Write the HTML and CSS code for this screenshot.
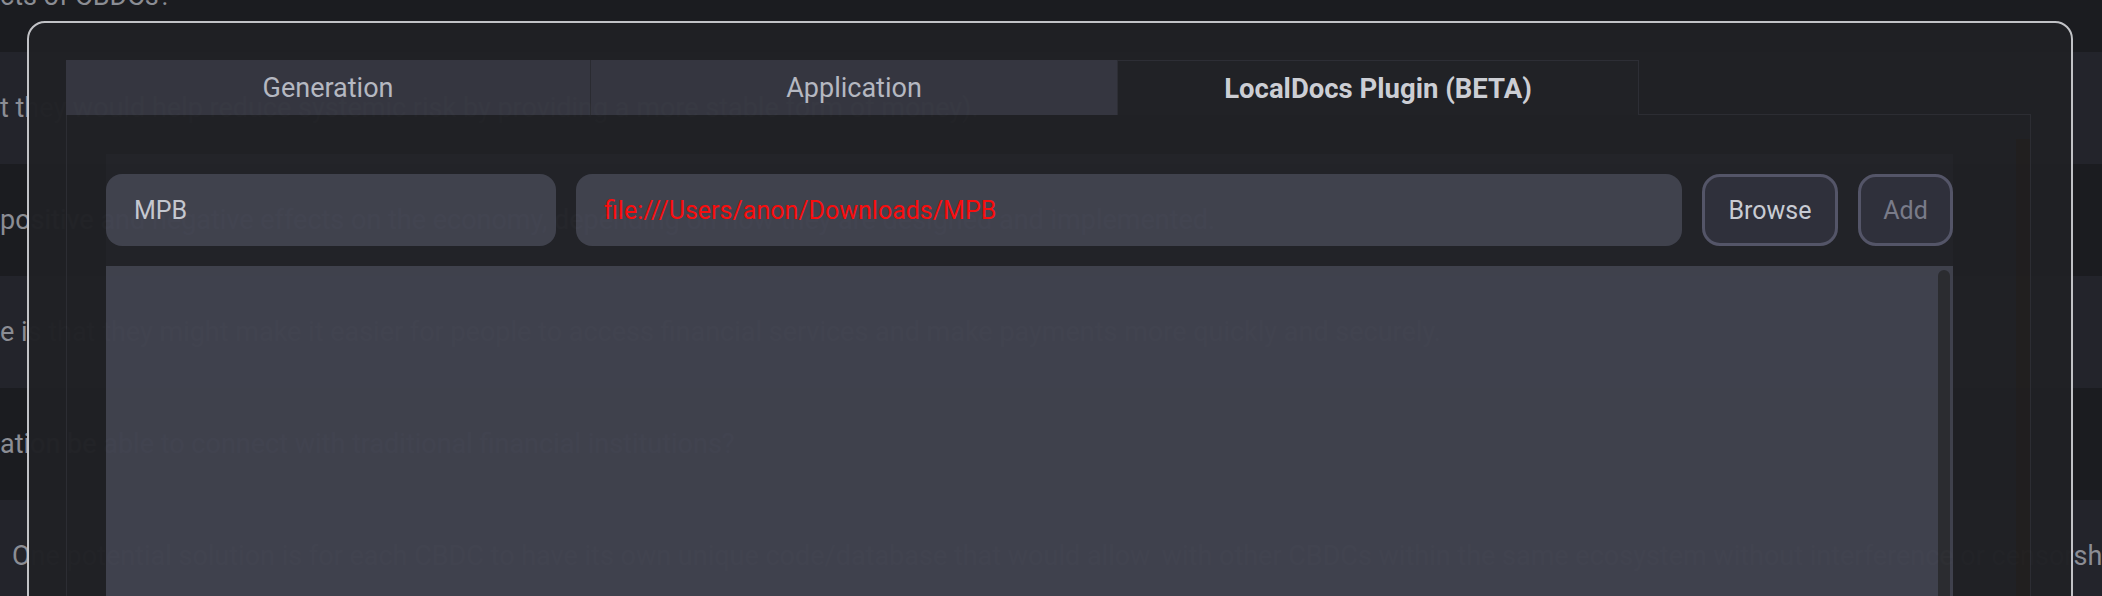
FILE: index.html
```html
<!DOCTYPE html>
<html>
<head>
<meta charset="utf-8">
<link rel="stylesheet" href="styles.css">
</head>
<body>
<div class="chat">
  <div class="row dark"><span class="msg">cts of CBDCs?</span></div>
  <div class="row light"><span class="msg">t they would help reduce systemic risk by providing a more stable form of money).</span></div>
  <div class="row dark"><span class="msg">positive and negative effects on the economy, depending on how they are designed and implemented.</span></div>
  <div class="row light"><span class="msg">e is that they might make it easier for people to access financial services and make payments more quickly and securely.</span></div>
  <div class="row dark"><span class="msg">ation be able to connect with traditional financial institutions?</span></div>
  <div class="row light last"><span class="msg first">One potential solution is for each CBDC to have its own unique code/database that would allow it to interact</span><span class="msg tail">with other CBDCs within the same ecosystem without interference or censorship</span></div>
</div>

<div class="dialog">
  <div class="tabs">
    <div class="tab gen">Generation</div>
    <div class="tab app">Application</div>
    <div class="tab active">LocalDocs Plugin (BETA)</div>
  </div>
  <div class="panel">
    <div class="docs">
      <div class="add-row">
        <div class="field name">MPB</div>
        <div class="field path">file:///Users/anon/Downloads/MPB</div>
        <div class="btn">Browse</div>
        <div class="btn disabled">Add</div>
      </div>
      <div class="list"><div class="scrollbar"></div></div>
    </div>
    <div class="panel-scroll"></div>
  </div>
</div>
</body>
</html>
```

FILE: styles.css
```css
html, body {
  margin: 0;
  padding: 0;
}
body {
  width: 2102px;
  height: 596px;
  overflow: hidden;
  background: #1b1c20;
  font-family: Roboto, "Liberation Sans", sans-serif;
  position: relative;
}

.chat {
  margin-top: -60px;
}
.row {
  height: 112px;
  display: flex;
  align-items: center;
  white-space: nowrap;
  overflow: hidden;
}
.row.dark { background: #1b1c20; }
.row.light { background: #23242b; }
.msg {
  font-size: 27px;
  color: #8b8d94;
}
.row.last {
  justify-content: space-between;
}
.msg.first {
  padding-left: 12px;
  flex: 0 1 auto;
  min-width: 0;
  overflow: hidden;
}
.msg.tail {
  flex: 0 0 auto;
  margin-right: -22px;
  padding-left: 8px;
}

.dialog {
  position: absolute;
  left: 27px;
  top: 21px;
  width: 2046px;
  height: 640px;
  box-sizing: border-box;
  border: 2px solid #c6c7cb;
  border-radius: 18px;
  background: #202125;
  opacity: 0.978;
  padding: 37px 40px 0 37px;
}

.tabs {
  display: flex;
  height: 55px;
  position: relative;
  z-index: 1;
}
.tab {
  box-sizing: border-box;
  background: #363741;
  color: #b9bcc5;
  font-size: 27px;
  display: flex;
  align-items: center;
  justify-content: center;
}
.tab.gen { width: 524px; }
.tab.app {
  width: 527px;
  border-left: 1px solid #2b2c32;
}
.tab.active {
  width: 522px;
  background: #212226;
  color: #d1d3d9;
  font-weight: 700;
  font-size: 27.5px;
  border: 1px solid #2e2f36;
  border-bottom: none;
}

.panel {
  margin-top: -1px;
  height: 520px;
  border: 1px solid #2d2e34;
  box-sizing: border-box;
  padding: 39px 0 0 39px;
  display: flex;
}

.docs {
  width: 1847px;
  background: #232429;
  padding-top: 20px;
  display: flex;
  flex-direction: column;
  gap: 20px;
}
.add-row {
  display: flex;
  gap: 20px;
  height: 72px;
}
.field {
  background: #41434f;
  border-radius: 16px;
  font-size: 25px;
  display: flex;
  align-items: center;
  padding-left: 28px;
  box-sizing: border-box;
}
.field.name {
  width: 450px;
  color: #c9ccd4;
}
.field.path {
  flex: 1;
  color: #ff0d0d;
}
.btn {
  box-sizing: border-box;
  border: 3px solid #56576a;
  border-radius: 18px;
  background: #30313c;
  color: #cdd0d8;
  font-size: 25px;
  display: flex;
  align-items: center;
  justify-content: center;
  width: 136px;
}
.btn.disabled {
  width: 95px;
  color: #7c7e8c;
}

.list {
  flex: 1;
  background: #40424e;
  display: flex;
  justify-content: flex-end;
  padding: 4px 3px 0 0;
}
.scrollbar {
  width: 12px;
  background: #2c2d31;
  border-radius: 6px 6px 0 0;
}

.panel-scroll {
  margin-left: auto;
  margin-top: -15px;
  width: 14px;
  background: #211f1f;
}
```
